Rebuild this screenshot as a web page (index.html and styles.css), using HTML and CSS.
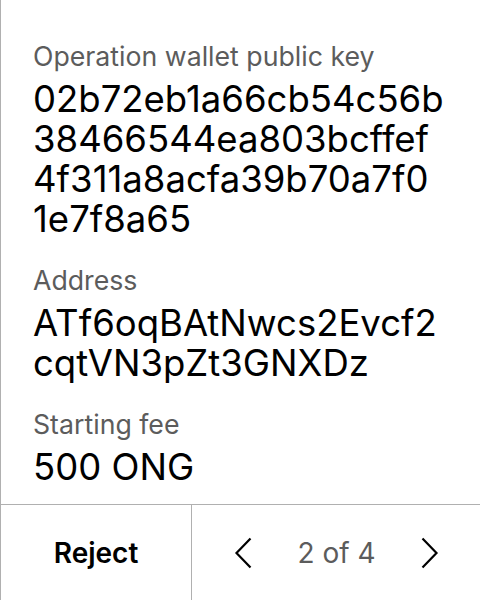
FILE: index.html
```html
<!DOCTYPE html>
<html>
<head>
<meta charset="utf-8">
<link rel="stylesheet" href="styles.css">
</head>
<body>
<div class="screen">
  <main class="details">
    <div class="item">
      <div class="label">Operation wallet public key</div>
      <div class="value">02b72eb1a66cb54c56b<br>38466544ea803bcffef<br>4f311a8acfa39b70a7f0<br>1e7f8a65</div>
    </div>
    <div class="item">
      <div class="label">Address</div>
      <div class="value">ATf6oqBAtNwcs2Evcf2<br>cqtVN3pZt3GNXDz</div>
    </div>
    <div class="item">
      <div class="label">Starting fee</div>
      <div class="value">500 ONG</div>
    </div>
  </main>
  <footer class="footer">
    <div class="reject">Reject</div>
    <div class="pager">
      <svg class="chev" width="18" height="32" viewBox="0 0 18 32"><path d="M16.5 1.5 L2.5 16 L16.5 30.5" fill="none" stroke="#000" stroke-width="2.2"/></svg>
      <span class="count">2 of 4</span>
      <svg class="chev" width="18" height="32" viewBox="0 0 18 32"><path d="M1.5 1.5 L15.5 16 L1.5 30.5" fill="none" stroke="#000" stroke-width="2.2"/></svg>
    </div>
  </footer>
</div>
</body>
</html>
```
FILE: styles.css
```css
* { box-sizing: border-box; }
html, body { margin: 0; padding: 0; background: #fff; }
body { font-family: Inter, "Noto Sans", sans-serif; color: #000; }
.screen {
  width: 480px;
  height: 600px;
  border-left: 1px solid #b0b0b0;
  display: flex;
  flex-direction: column;
}
.details {
  flex: 1;
  padding: 40px 30px 0 32px;
  display: flex;
  flex-direction: column;
  gap: 25px;
}
.label {
  font-size: 26.7px;
  line-height: 32px;
  color: #5c5c5c;
  margin-bottom: 7px;
}
.value {
  font-size: 36.5px;
  line-height: 40px;
  word-break: break-all;
}
.footer {
  height: 96px;
  border-top: 1px solid #b0b0b0;
  display: flex;
}
.reject {
  width: 191px;
  border-right: 1px solid #b0b0b0;
  display: flex;
  align-items: center;
  justify-content: center;
  font-size: 28px;
  font-weight: 600;
}
.pager {
  flex: 1;
  display: flex;
  align-items: center;
  justify-content: space-between;
  padding: 0 41px 0 42px;
}
.count {
  font-size: 28px;
  color: #5c5c5c;
}
.chev { display: block; }
```
